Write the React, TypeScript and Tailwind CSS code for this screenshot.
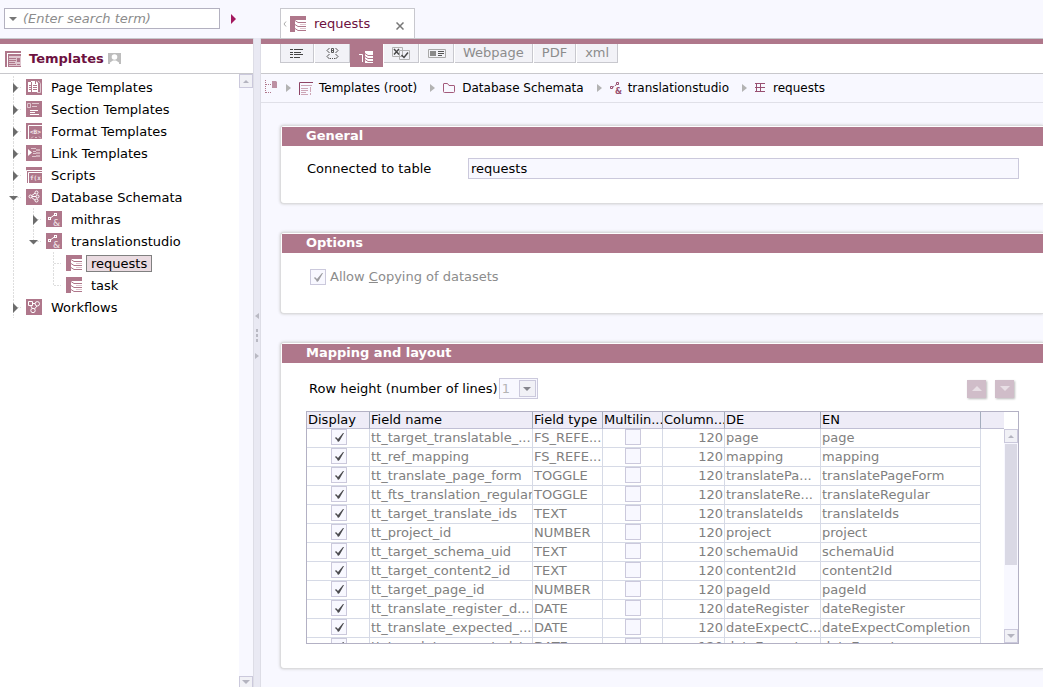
import { useState } from 'react';
import type { ReactNode } from 'react';

type Segment = 'line' | 'blank' | 'closed' | 'open' | 'openLast' | 'mid' | 'last';

interface TreeItem {
  label: string;
  icon: keyof typeof ICONS;
  guides: Segment[];
}

interface Field {
  name: string;
  type: string;
  de: string;
  en: string;
}

const MAUVE = '#af778b';
const PALE = '#dfc6cf';

const svgText = {
  fontFamily: '"DejaVu Sans Mono", monospace',
  fontWeight: 'bold',
  fontSize: 6,
  fill: '#f3e8ec',
};

const Square = ({ children }: { children: ReactNode }) => (
  <svg width="16" height="16" viewBox="0 0 16 16" className="shrink-0" aria-hidden="true">
    <rect width="16" height="16" fill={MAUVE} />
    {children}
  </svg>
);

const SchemaIcon = () => (
  <Square>
    <path d="M4.5 7.5L10 3.5M4.5 7.5H11M4.5 7.5L10 12" stroke="#fff" fill="none" />
    <g fill={MAUVE} stroke="#fff">
      <circle cx="4.500" cy="7.500" r="1.500" />
      <circle cx="10.500" cy="3.500" r="1.500" />
      <circle cx="11.500" cy="7.500" r="1.500" />
      <circle cx="10.500" cy="11.500" r="1.500" />
    </g>
  </Square>
);

const LinkedSchemaIcon = () => (
  <Square>
    <path d="M5 6.500L9 3.500" stroke="#fff" />
    <rect x="2.500" y="6.500" width="2" height="2" fill={MAUVE} stroke="#fff" />
    <rect x="8.500" y="2.500" width="2" height="2" fill={MAUVE} stroke="#fff" />
    <text x="7" y="15" fontSize="9" fontFamily="DejaVu Sans, sans-serif" fill="#f3e8ec">&amp;</text>
  </Square>
);

const TableIcon = () => (
  <svg width="16" height="16" viewBox="0 0 16 16" className="shrink-0" aria-hidden="true">
    <path d="M0 0H16V4H5V16H0Z" fill={MAUVE} />
    <path d="M5 4.500L8 6.500H16M5 8.500L8 10.500H16M5 12.500L8 14.500H16" stroke={MAUVE} fill="none" />
    <path d="M10 8.500H16M10 12.500H16" stroke={PALE} fill="none" />
  </svg>
);

const RootIcon = () => (
  <svg width="16" height="16" viewBox="0 0 16 16" className="shrink-0" aria-hidden="true" shapeRendering="crispEdges">
    <path d="M0 0H16V2H2V16H0Z" fill={MAUVE} />
    <rect x="3" y="3" width="13" height="13" fill={PALE} />
    <path d="M3 3H16V5H3ZM3 5H4V16H3ZM4 7H11V8H4ZM4 9H11V10H4ZM4 11H10V12H4ZM4 13H11V14H4ZM12 7H15V11H12ZM12 13H15V14H12ZM4 15H16V16H4Z" fill={MAUVE} />
  </svg>
);

const PageIcon = () => (
  <Square>
    <path d="M2 3H6V13H2ZM5 2H10L12 4V13H5Z" fill="#fff" />
    <path d="M12 2.500H13L14.500 4.500V13.500H11" fill="none" stroke={PALE} />
    <path d="M5.500 3V13M9.500 2V5M7 6.500H11M7 8.500H11M7 10.500H11M3 6.500H5M3 8.500H5M3 10.500H5" stroke={MAUVE} fill="none" />
  </Square>
);

const SectionIcon = () => (
  <Square>
    <path d="M1.500 2.500H4.500V6.500H1.500ZM6 2.500H13M6 5.500H11" stroke={PALE} fill="none" />
    <path d="M4 9.500H12M4 11.500H9M4 13.500H13" stroke="#fff" />
  </Square>
);

const FormatIcon = () => (
  <Square>
    <path d="M2.500 16V2.500H16" stroke="#fff" fill="none" />
    <text x="4" y="11" {...svgText}>&lt;B&gt;</text>
    <path d="M5 15.500L7 13.500M9 14.500H11M13 13.500L15 15.500" stroke={PALE} fill="none" />
  </Square>
);

const LinkIcon = () => (
  <Square>
    <path d="M2 4L6 7.500L2 11Z" fill="#fff" />
    <path d="M5 3.500H10M7 6.500H10M7 8.500H10M6 11.500H10" stroke={PALE} />
    <path d="M10 4H14V12H10Z" fill="#d2adb9" />
    <path d="M10 6.500H14M10 9.500H14" stroke={MAUVE} />
  </Square>
);

const ScriptIcon = () => (
  <Square>
    <path d="M0.500 16V3.500H16M2.500 16V5.500H16" stroke="#fff" fill="none" />
    <text x="4" y="13" {...svgText}>f(x</text>
  </Square>
);

const WorkflowIcon = () => (
  <Square>
    <g fill="none" stroke="#fff">
      <path d="M2.500 2.500H6.500V6.500H2.500ZM6.500 4.500H9M4.500 6.500L6 9M11 7L8.500 10" />
      <circle cx="11.300" cy="4.800" r="2.200" />
      <circle cx="7" cy="11.500" r="2.200" />
    </g>
  </Square>
);

const ICONS = {
  page: PageIcon,
  section: SectionIcon,
  format: FormatIcon,
  link: LinkIcon,
  script: ScriptIcon,
  schema: SchemaIcon,
  linked: LinkedSchemaIcon,
  table: TableIcon,
  workflow: WorkflowIcon,
};

const TREE: TreeItem[] = [
  { label: 'Page Templates', icon: 'page', guides: ['closed'] },
  { label: 'Section Templates', icon: 'section', guides: ['closed'] },
  { label: 'Format Templates', icon: 'format', guides: ['closed'] },
  { label: 'Link Templates', icon: 'link', guides: ['closed'] },
  { label: 'Scripts', icon: 'script', guides: ['closed'] },
  { label: 'Database Schemata', icon: 'schema', guides: ['open'] },
  { label: 'mithras', icon: 'linked', guides: ['line', 'closed'] },
  { label: 'translationstudio', icon: 'linked', guides: ['line', 'openLast'] },
  { label: 'requests', icon: 'table', guides: ['line', 'blank', 'mid'] },
  { label: 'task', icon: 'table', guides: ['line', 'blank', 'last'] },
  { label: 'Workflows', icon: 'workflow', guides: ['closed'] },
];

const FIELDS: Field[] = [
  { name: 'tt_target_translatable_...', type: 'FS_REFE...', de: 'page', en: 'page' },
  { name: 'tt_ref_mapping', type: 'FS_REFE...', de: 'mapping', en: 'mapping' },
  { name: 'tt_translate_page_form', type: 'TOGGLE', de: 'translatePa...', en: 'translatePageForm' },
  { name: 'tt_fts_translation_regular', type: 'TOGGLE', de: 'translateRe...', en: 'translateRegular' },
  { name: 'tt_target_translate_ids', type: 'TEXT', de: 'translateIds', en: 'translateIds' },
  { name: 'tt_project_id', type: 'NUMBER', de: 'project', en: 'project' },
  { name: 'tt_target_schema_uid', type: 'TEXT', de: 'schemaUid', en: 'schemaUid' },
  { name: 'tt_target_content2_id', type: 'TEXT', de: 'content2Id', en: 'content2Id' },
  { name: 'tt_target_page_id', type: 'NUMBER', de: 'pageId', en: 'pageId' },
  { name: 'tt_translate_register_d...', type: 'DATE', de: 'dateRegister', en: 'dateRegister' },
  { name: 'tt_translate_expected_...', type: 'DATE', de: 'dateExpectC...', en: 'dateExpectCompletion' },
  { name: 'tt_translate_expected_t...', type: 'DATE', de: 'dateExpect...', en: 'dateExpect' },
];

const HEADERS = ['Display', 'Field name', 'Field type', 'Multilin...', 'Column...', 'DE', 'EN'];

function Guide({ kind }: { kind: Segment }) {
  const ends = kind === 'last' || kind === 'openLast';
  return (
    <svg width="20" height="22" viewBox="0 0 20 22" className="shrink-0" aria-hidden="true">
      {kind !== 'blank' && <path d={ends ? 'M7.500 0V11' : 'M7.500 0V22'} stroke="#dedede" strokeDasharray="2 1" />}
      {kind !== 'line' && kind !== 'blank' && <path d="M8 11.500H15" stroke="#dedede" strokeDasharray="2 1" />}
      {kind === 'closed' && <path d="M7 7L12 12L7 17Z" fill="#6c6c6c" />}
      {kind.startsWith('open') && <path d="M3 10H12L7.500 14.500Z" fill="#6c6c6c" />}
    </svg>
  );
}

function Triangle({ up = false, fill = '#b4b4bf' }: { up?: boolean; fill?: string }) {
  return (
    <svg width="8" height="4" viewBox="0 0 8 4" aria-hidden="true">
      <path d={up ? 'M1 4L4 1L7 4Z' : 'M0 0H8L4 4Z'} fill={fill} />
    </svg>
  );
}

function ScrollButton({ up = false, label, className = 'h-[14px]' }: { up?: boolean; label: string; className?: string }) {
  return (
    <button aria-label={label} className={`flex w-[14px] shrink-0 items-center justify-center border border-[#cbc9dc] bg-[#f1f1f6] ${className}`}>
      <Triangle up={up} />
    </button>
  );
}

function Check({ id, checked = false, pale = false, label }: { id?: string; checked?: boolean; pale?: boolean; label?: string }) {
  return (
    <span className="inline-grid size-4 align-top">
      <input
        id={id}
        type="checkbox"
        disabled
        defaultChecked={checked}
        aria-label={label}
        className="col-start-1 row-start-1 size-4 appearance-none border border-[#cbc9dc] bg-[#f8f8ff]"
      />
      {checked && (
        <svg width="16" height="16" viewBox="0 0 16 16" className="pointer-events-none col-start-1 row-start-1" aria-hidden="true">
          <path d="M4 9L6 11L7 13L8.500 12L13 4L12 4L7 10L5 8Z" fill={pale ? '#9c9ca0' : '#4a4a4e'} />
        </svg>
      )}
    </span>
  );
}

function Panel({ title, children }: { title: string; children: ReactNode }) {
  return (
    <section className="rounded-l-sm border-y border-l border-[#dcdcde] bg-white pt-px pl-px shadow-[0_0_3px_#c8c8c8]">
      <h2 className="h-[19px] bg-[#af778b] pl-6 leading-[18px] font-bold text-white">{title}</h2>
      {children}
    </section>
  );
}

function Sidebar() {
  const [selected, setSelected] = useState('requests');

  return (
    <aside className="flex w-[253px] shrink-0 flex-col border-t border-[#c8c8cc] bg-white">
      <div className="h-[5px] shrink-0 bg-[#af778b]" />
      <div className="flex h-[30px] shrink-0 items-center border-b border-[#c8c8cc] pl-[5px]">
        <RootIcon />
        <h1 className="ml-2 font-bold text-[#6d1140]">Templates</h1>
        <svg width="13" height="11" viewBox="0 0 13 11" className="ml-1" aria-hidden="true">
          <rect width="13" height="11" fill="#bdbdbd" />
          <circle cx="6.500" cy="4" r="2.800" fill="#fff" />
          <path d="M2 11V9.500L5 7.500H8L11 9.500V11Z" fill="#fff" />
        </svg>
      </div>
      <div className="flex min-h-0 grow">
        <ul className="grow pt-[2px] pl-[6px]">
          {TREE.map((item) => {
            const Icon = ICONS[item.icon];
            const active = item.label === selected;
            return (
              <li key={item.label}>
                <button className="flex h-[22px] items-center" onClick={() => setSelected(item.label)}>
                  {item.guides.map((g, i) => (
                    <Guide key={i} kind={g} />
                  ))}
                  <Icon />
                  <span className={`ml-1 border px-1 leading-[15px] ${active ? 'border-[#808080] bg-[#eadbe1]' : 'border-transparent'}`}>
                    {item.label}
                  </span>
                </button>
              </li>
            );
          })}
        </ul>
        <div className="flex w-[14px] flex-col justify-between bg-[#f8f8ff]">
          <ScrollButton up label="Scroll tree up" />
          <ScrollButton label="Scroll tree down" className="h-[11px] border-b-0" />
        </div>
      </div>
    </aside>
  );
}

function Splitter() {
  return (
    <div className="flex w-2 shrink-0 flex-col items-center border-x border-[#dddde6] bg-[#e9e9f3] pt-[274px]">
      <svg width="6" height="48" viewBox="0 0 6 48" aria-hidden="true" fill="#b9b9c3">
        <path d="M5 1V7L1 4ZM2 17H4V20H2ZM2 22H4V25H2ZM2 27H4V30H2ZM1 41V47L5 44Z" />
      </svg>
    </div>
  );
}

function Toolbar() {
  const tool = 'flex h-[19px] items-center justify-center border-r border-b border-[#c8c8ce] bg-[#f2f2f7]';

  return (
    <div className="flex h-[30px] shrink-0 items-start gap-px border-b border-[#c8c8cc] bg-white pl-[19px] text-[#8c8c8c]">
      <button aria-label="Properties" className={`${tool} w-[34px] border-l`}>
        <svg width="14" height="9" viewBox="0 0 14 9" fill="#444">
          <path d="M0 0H3V1H0ZM0 3H3V4H0ZM0 5H3V6H0ZM0 8H3V9H0ZM4 0H13V1H4ZM4 3H11V4H4ZM4 5H13V6H4ZM4 8H10V9H4Z" />
        </svg>
      </button>
      <button aria-label="Form" className={`${tool} w-[35px]`}>
        <svg width="13" height="13" viewBox="0 0 13 13" stroke="#555" fill="none">
          <path d="M3.500 1L1 3.500L3.500 6M9.500 1L12 3.500L9.500 6M3.500 7L1 9.500L3.500 12M9.500 7L12 9.500L9.500 12" />
          <path d="M5.500 1.500H7.500V5.500H5.500ZM5.500 3.500H7.500M4 11.500H5M6 11.500H7M8 11.500H9" />
        </svg>
      </button>
      <button aria-label="Mapping" className="-ml-px flex h-[23px] w-[33px] justify-center bg-[#af778b] pt-[6px]">
        <svg width="15" height="13" viewBox="0 0 15 13" fill="none">
          <path d="M0 4.500H3.500V12" stroke="#fff" />
          <path d="M6 1H14V13H6Z" fill="#fff" />
          <path d="M6 3.500L9 5.500H14M6 6.500L9 8.500H14M6 9.500L9 11.500H14" stroke={MAUVE} />
        </svg>
      </button>
      <button aria-label="Rules" className={`${tool} w-[35px]`}>
        <svg width="18" height="13" viewBox="0 0 18 13" fill="none">
          <path d="M0.500 0.500H10.500V9.500H0.500ZM7.500 3.500H17.500V12.500H7.500Z" stroke="#b2b2b2" fill="#f2f2f7" />
          <path d="M2 2L7 7.500M7 2L2 7.500M9.500 8L12 10.500L16 5.500" stroke="#484848" strokeWidth="1.500" />
        </svg>
      </button>
      <button aria-label="Snippet" className={`${tool} w-[34px]`}>
        <svg width="18" height="9" viewBox="0 0 18 9" fill="none">
          <path d="M0.500 0.500H17.500V8.500H0.500Z" stroke="#a8a8a8" />
          <path d="M2 2H8V7H2Z" fill="#8a8a8a" />
          <path d="M10 2.500H16M10 4.500H16M10 6.500H14" stroke="#555" />
        </svg>
      </button>
      <button className={`${tool} px-2`}>Webpage</button>
      <button className={`${tool} px-2`}>PDF</button>
      <button className={`${tool} px-2`}>xml</button>
    </div>
  );
}

function Crumb({ icon, children }: { icon: ReactNode; children: ReactNode }) {
  return (
    <li className="flex items-center">
      <svg width="5" height="8" viewBox="0 0 5 8" className="mr-2" aria-hidden="true">
        <path d="M0 0L5 4L0 8Z" fill="#b3b3b3" />
      </svg>
      {icon}
      <a href="#" className="ml-[6px]">{children}</a>
    </li>
  );
}

function Breadcrumbs() {
  return (
    <nav className="flex h-[29px] shrink-0 items-center border-b border-[#e0e0e8] pl-1 text-xs">
      <svg width="13" height="16" viewBox="0 0 13 16" className="mr-2" aria-hidden="true">
        <path d="M0.500 0V14M1 4.500H6M1 12.500H6" stroke="#af778b" strokeDasharray="1 1" />
        <path d="M7 1H11L12 2V8H7Z" fill="#bd90a3" />
      </svg>
      <ol className="flex items-center gap-[13px]">
        <Crumb
          icon={
            <svg width="14" height="13" viewBox="0 0 14 13" fill="none" aria-hidden="true">
              <path d="M0.500 13V0.500H14" stroke="#8e4465" />
              <path d="M2 3.500H13M2 6.500H9M2 8.500H9M2 10.500H7M2 12.500H9M11.500 5V10M11.500 11V13" stroke="#cda6b6" />
            </svg>
          }
        >
          Templates (root)
        </Crumb>
        <Crumb
          icon={
            <svg width="13" height="10" viewBox="0 0 13 10" aria-hidden="true">
              <path d="M0.500 1Q0.500 0.500 1 0.500H4.500L6 2.500H11Q11.500 2.500 11.500 3V8.500Q11.500 9.500 10.500 9.500H1.500Q0.500 9.500 0.500 8.500Z" fill="none" stroke="#a35a7b" />
            </svg>
          }
        >
          Database Schemata
        </Crumb>
        <Crumb
          icon={
            <svg width="12" height="12" viewBox="0 0 12 12" fill="none" aria-hidden="true">
              <path d="M2.500 5.500L8 1.500" stroke="#985071" strokeDasharray="2 1" />
              <path d="M0.500 4.500H2.500V6.500H0.500ZM6.500 0.500H8.500V2.500H6.500Z" fill="#f8f8ff" stroke="#985071" />
              <text x="5" y="12" fontSize="8" fontFamily="DejaVu Sans, sans-serif" fontWeight="bold" fill="#985071">&amp;</text>
            </svg>
          }
        >
          translationstudio
        </Crumb>
        <Crumb
          icon={
            <svg width="11" height="10" viewBox="0 0 11 10" fill="none" stroke="#985071" className="mr-px" aria-hidden="true">
              <path d="M0 0.500H10M0 4.500H10M0 8.500H10M1.500 0V9M5.500 0V9" />
            </svg>
          }
        >
          requests
        </Crumb>
      </ol>
    </nav>
  );
}

function MappingTable() {
  const cell = 'overflow-hidden whitespace-nowrap border-r border-b border-[#d6dae6] pl-px';

  return (
    <div className="mt-3 mr-6 ml-6 flex h-[233px] border border-[#b3b1c4]">
      <div className="min-w-0 grow overflow-hidden">
        <table className="w-full table-fixed border-separate border-spacing-0">
          <colgroup>
            <col className="w-[63px]" />
            <col className="w-[163px]" />
            <col className="w-[70px]" />
            <col className="w-[60px]" />
            <col className="w-[62px]" />
            <col className="w-[96px]" />
            <col className="w-[160px]" />
            <col />
          </colgroup>
          <thead>
            <tr className="h-[17px] bg-[#eeecf7] text-left leading-4">
              {HEADERS.map((h) => (
                <th key={h} className="overflow-hidden border-r border-b border-r-[#a4adbd] border-b-[#c0bfd4] pl-px font-normal whitespace-nowrap">
                  {h}
                </th>
              ))}
              <th className="border-b border-[#c0bfd4]" />
            </tr>
          </thead>
          <tbody className="text-[#808080]">
            {FIELDS.map((f) => (
              <tr key={f.name} className="h-[19px] leading-[18px]">
                <td className={`${cell} text-center`}>
                  <Check checked label={`Display ${f.name}`} />
                </td>
                <td className={cell}>{f.name}</td>
                <td className={cell}>{f.type}</td>
                <td className={`${cell} text-center`}>
                  <Check label={`Multilingual ${f.name}`} />
                </td>
                <td className={`${cell} pr-px text-right`}>120</td>
                <td className={cell}>{f.de}</td>
                <td className={cell}>{f.en}</td>
                <td />
              </tr>
            ))}
          </tbody>
        </table>
      </div>
      <div className="flex w-[14px] shrink-0 flex-col pt-[17px]">
        <ScrollButton up label="Scroll table up" />
        <div className="grow bg-[#f8f8ff] px-px pt-px">
          <div className="h-[121px] bg-[#dad9e5]" />
        </div>
        <ScrollButton label="Scroll table down" />
      </div>
    </div>
  );
}

export default function App() {
  const [query, setQuery] = useState('');
  const move = 'flex h-[18px] w-[19px] items-center justify-center bg-[#d0bdc9] shadow-[1px_1px_2px_#bbb]';

  return (
    <div className="flex h-screen flex-col overflow-hidden bg-[#f8f8ff] font-['DejaVu_Sans',sans-serif] text-[13px] text-black">
      <header className="flex h-[38px] shrink-0 items-end">
        <form className="flex w-[261px] shrink-0 items-center pb-[9px] pl-1" onSubmit={(e) => e.preventDefault()}>
          <label className="flex h-[21px] w-[216px] items-center gap-[6px] border border-[#b3b1c0] bg-white pl-1">
            <Triangle fill="#777777" />
            <input
              aria-label="Search"
              value={query}
              onChange={(e) => setQuery(e.target.value)}
              placeholder="(Enter search term)"
              className="min-w-0 grow italic outline-none placeholder:text-[#8c8c8c]"
            />
          </label>
          <button aria-label="Search" className="ml-[11px]">
            <svg width="5" height="10" viewBox="0 0 5 10">
              <path d="M0 0L5 5L0 10Z" fill="#a3195f" />
            </svg>
          </button>
        </form>
        <div className="ml-[19px] flex h-[30px] w-[135px] items-center border-x border-t border-[#c8c8ce] bg-white pl-[2px]">
          <svg width="4" height="6" viewBox="0 0 4 6" className="mr-[3px]" aria-hidden="true">
            <path d="M3 0.500L1 3L3 5.500" fill="none" stroke="#aaa" />
          </svg>
          <TableIcon />
          <span className="ml-2 text-[#6d1140]">requests</span>
          <button aria-label="Close tab" className="mt-1 mr-[10px] ml-auto">
            <svg width="8" height="8" viewBox="0 0 8 8">
              <path d="M0.500 0.500L7.500 7.500M7.500 0.500L0.500 7.500" stroke="#777" strokeWidth="1.500" />
            </svg>
          </button>
        </div>
      </header>

      <div className="flex min-h-0 grow">
        <Sidebar />
        <Splitter />
        <main className="flex min-w-0 grow flex-col border-t border-[#c8c8cc]">
          <div className="h-[5px] shrink-0 bg-[#af778b]" />
          <Toolbar />
          <Breadcrumbs />

          <div className="flex flex-col gap-7 pt-[22px] pl-[19px]">
            <Panel title="General">
              <div className="flex items-center pt-3 pr-6 pb-6 pl-[25px]">
                <label htmlFor="connected" className="w-[161px] shrink-0">Connected to table</label>
                <input
                  id="connected"
                  readOnly
                  defaultValue="requests"
                  className="h-[21px] min-w-0 grow border border-[#cbc9dc] bg-[#f8f8ff] px-[2px] outline-none"
                />
              </div>
            </Panel>

            <Panel title="Options">
              <div className="flex items-center gap-1 pt-4 pb-7 pl-7 text-[#8c8c8c]">
                <Check id="copying" checked pale />
                <label htmlFor="copying" className="leading-4">
                  Allow <span className="underline">C</span>opying of datasets
                </label>
              </div>
            </Panel>

            <Panel title="Mapping and layout">
              <div className="flex items-center pt-[15px] pr-[29px] pl-[27px]">
                <label htmlFor="rows">Row height (number of lines)</label>
                <span className="relative ml-px">
                  <select
                    id="rows"
                    disabled
                    className="block h-[21px] w-[39px] appearance-none border border-[#cbc9dc] bg-[#f8f8ff] pl-[2px] text-[#b4b4b4] opacity-100"
                  >
                    <option>1</option>
                  </select>
                  <span className="pointer-events-none absolute top-[2px] right-[2px] flex size-[17px] items-center justify-center border border-[#cbc9dc] bg-[#f1f1f6]">
                    <Triangle fill="#85858c" />
                  </span>
                </span>
                <div className="ml-auto flex gap-[9px]">
                  <button aria-label="Move up" disabled className={move}>
                    <svg width="10" height="5" viewBox="0 0 10 5"><path d="M0 5L5 0L10 5Z" fill="#e8dfe5" /></svg>
                  </button>
                  <button aria-label="Move down" disabled className={move}>
                    <svg width="10" height="5" viewBox="0 0 10 5"><path d="M0 0H10L5 5Z" fill="#e8dfe5" /></svg>
                  </button>
                </div>
              </div>
              <MappingTable />
              <div className="h-6" />
            </Panel>
          </div>
        </main>
      </div>
    </div>
  );
}
